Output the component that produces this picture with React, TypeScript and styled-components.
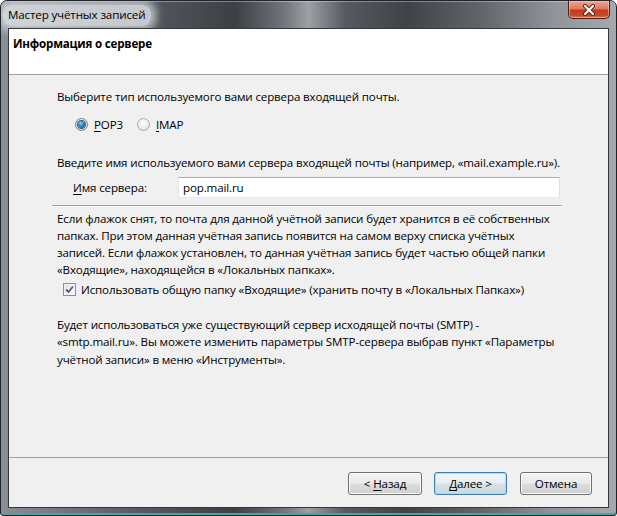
import React from 'react';
import styled, { createGlobalStyle } from 'styled-components';

const Global = createGlobalStyle`
  html, body { margin: 0; padding: 0; background: #ffffff; }
  body { font-family: "Open Sans", "Noto Sans", sans-serif; color: #000; }
`;

const Window = styled.div`
  width: 617px;
  height: 516px;
  box-sizing: border-box;
  display: flex;
  flex-direction: column;
  border: 1px solid #202428;
  border-radius: 7px 7px 3px 3px;
  overflow: hidden;
  background: linear-gradient(
    90deg,
    #8a9095 0%,
    #6c7277 12%,
    #50565b 25%,
    #3b4045 38%,
    #6f757a 46%,
    #9aa0a4 50%,
    #545a5f 56%,
    #3e4347 66%,
    #5f6569 78%,
    #8f959a 90%,
    #a3a9ad 100%
  );
  box-shadow: inset 0 -2px 0 #4e9fb0, inset 0 1px 0 rgba(255, 255, 255, 0.35);
`;

const TitleBar = styled.div`
  height: 27px;
  display: flex;
  align-items: flex-start;
  justify-content: space-between;
  flex-shrink: 0;
`;

const TitleText = styled.span`
  margin: 4px 0 0 2px;
  padding: 2px 6px 3px 5px;
  font-size: 11.6px;
  letter-spacing: -0.15px;
  line-height: 16px;
  color: #000;
  border-radius: 8px;
  background: rgba(222, 226, 229, 0.82);
  box-shadow: 0 0 8px 5px rgba(222, 226, 229, 0.75);
`;

const CloseButton = styled.div`
  width: 42px;
  height: 18px;
  margin-right: 6px;
  box-sizing: border-box;
  border: 1px solid #4a1c14;
  border-top: none;
  border-radius: 0 0 5px 5px;
  background: linear-gradient(
    180deg,
    #eba393 0%,
    #dc7a62 45%,
    #c23a1e 55%,
    #c8482a 85%,
    #df7450 100%
  );
  box-shadow: inset 0 0 0 1px rgba(255, 220, 210, 0.5);
  display: flex;
  align-items: center;
  justify-content: center;
`;

const Client = styled.div`
  flex: 1;
  margin: 0 7px 7px 7px;
  display: flex;
  flex-direction: column;
  border: 1px solid #33383c;
  background: #f0f0f0;
`;

const Header = styled.div`
  height: 46px;
  box-sizing: border-box;
  background: #ffffff;
  border-bottom: 1px solid #a0a0a0;
  padding: 6px 0 0 4px;
  flex-shrink: 0;
`;

const HeaderTitle = styled.div`
  font-size: 11.6px;
  letter-spacing: -0.2px;
  font-weight: 700;
  line-height: 17px;
`;

const Body = styled.div`
  flex: 1;
  padding: 13px 46px 0 48px;
  font-size: 11.6px;
  letter-spacing: -0.15px;
`;

const Para = styled.div<{ $top: number; $lh?: number }>`
  margin-top: ${(p) => p.$top}px;
  line-height: ${(p) => p.$lh ?? 17}px;
  white-space: nowrap;
`;

const Line = styled.span`
  display: block;
`;

const RadioRow = styled.div`
  margin-top: 11px;
  padding-left: 18px;
  height: 17px;
  display: flex;
  align-items: center;
`;

const RadioItem = styled.label`
  display: flex;
  align-items: center;
  gap: 6px;
  margin-right: 14px;
  line-height: 17px;
`;

const RadioCircle = styled.span<{ $checked?: boolean }>`
  width: 13px;
  height: 13px;
  box-sizing: border-box;
  border-radius: 50%;
  border: 1px solid ${(p) => (p.$checked ? '#6a7f8e' : '#a8acb0')};
  background: radial-gradient(circle at 50% 40%, #ffffff 0%, #e9eaeb 60%, #cfd2d4 100%);
  display: flex;
  align-items: center;
  justify-content: center;
  &::after {
    content: '';
    display: ${(p) => (p.$checked ? 'block' : 'none')};
    width: 7px;
    height: 7px;
    border-radius: 50%;
    background: radial-gradient(circle at 40% 35%, #7fd0f2 0%, #2a86b8 45%, #0e4a6c 100%);
    box-shadow: 0 0 0 1px #2d5370;
  }
`;

const U = styled.span`
  text-decoration: underline;
  text-underline-offset: 2px;
`;

const InputRow = styled.div`
  margin-top: 6px;
  padding-left: 16px;
  display: flex;
  align-items: center;
  height: 21px;
`;

const FieldLabel = styled.label`
  width: 105px;
  line-height: 17px;
`;

const TextInput = styled.div`
  width: 382px;
  height: 21px;
  box-sizing: border-box;
  background: #ffffff;
  border: 1px solid #dbdfe6;
  border-top-color: #abadb3;
  border-left-color: #e2e3ea;
  border-right-color: #dbdfe6;
  border-bottom-color: #e3e9ef;
  padding: 0 4px;
  line-height: 19px;
`;

const Separator = styled.div`
  margin: 7px 0 0 -5px;
  width: 510px;
  height: 1px;
  background: #a0a0a0;
  box-shadow: 0 1px 0 #ffffff;
`;

const CheckRow = styled.div`
  margin-top: 2px;
  padding-left: 6px;
  display: flex;
  align-items: center;
  gap: 5px;
  height: 17px;
  line-height: 17px;
  white-space: nowrap;
`;

const CheckBox = styled.span`
  width: 13px;
  height: 13px;
  box-sizing: border-box;
  border: 1px solid #8f8f8f;
  background: linear-gradient(135deg, #dcdcdc 0%, #f6f6f6 70%, #ffffff 100%);
  box-shadow: inset 0 0 0 1px #f4f4f4;
  display: flex;
  align-items: center;
  justify-content: center;
`;

const Footer = styled.div`
  height: 50px;
  box-sizing: border-box;
  border-top: 1px solid #a0a0a0;
  display: flex;
  justify-content: flex-end;
  align-items: flex-start;
  padding: 14px 16px 0 0;
  flex-shrink: 0;
`;

const Button = styled.button<{ $default?: boolean; $w: number; $gap: number }>`
  width: ${(p) => p.$w}px;
  height: 23px;
  margin-left: ${(p) => p.$gap}px;
  box-sizing: border-box;
  font-family: "Open Sans", "Noto Sans", sans-serif;
  font-size: 11.6px;
  letter-spacing: -0.15px;
  color: #000;
  padding: 0;
  border-radius: 3px;
  border: 1px solid ${(p) => (p.$default ? '#3c7fb1' : '#707070')};
  background: ${(p) =>
    p.$default
      ? 'linear-gradient(180deg, #f1f6f9 0%, #e8eef2 48%, #d8e2e8 52%, #cbd8e0 100%)'
      : 'linear-gradient(180deg, #f2f2f2 0%, #ebebeb 48%, #dddddd 52%, #cfcfcf 100%)'};
  box-shadow: inset 0 0 0 1px ${(p) => (p.$default ? '#a9dcf5' : '#fbfbfb')};
  cursor: default;
`;

export default function App() {
  return (
    <>
      <Global />
      <Window>
        <TitleBar>
          <TitleText>Мастер учётных записей</TitleText>
          <CloseButton>
            <svg width="14" height="12" viewBox="0 0 14 12">
              <path d="M3 2 L11 10 M11 2 L3 10" stroke="#5a2418" strokeWidth="4" strokeLinecap="round" />
              <path d="M3 2 L11 10 M11 2 L3 10" stroke="#ffffff" strokeWidth="2.2" strokeLinecap="round" />
            </svg>
          </CloseButton>
        </TitleBar>
        <Client>
          <Header>
            <HeaderTitle>Информация о сервере</HeaderTitle>
          </Header>
          <Body>
            <Para $top={0}>Выберите тип используемого вами сервера входящей почты.</Para>
            <RadioRow>
              <RadioItem>
                <RadioCircle $checked />
                <span>
                  <U>P</U>OP3
                </span>
              </RadioItem>
              <RadioItem>
                <RadioCircle />
                <span>
                  <U>I</U>MAP
                </span>
              </RadioItem>
            </RadioRow>
            <Para $top={21}>
              Введите имя используемого вами сервера входящей почты (например, «mail.example.ru»).
            </Para>
            <InputRow>
              <FieldLabel>
                <U>И</U>мя сервера:
              </FieldLabel>
              <TextInput>pop.mail.ru</TextInput>
            </InputRow>
            <Separator />
            <Para $top={3.5} $lh={17.3}>
              <Line>Если флажок снят, то почта для данной учётной записи будет хранится в её собственных</Line>
              <Line>папках. При этом данная учётная запись появится на самом верху списка учётных</Line>
              <Line>записей. Если флажок установлен, то данная учётная запись будет частью общей папки</Line>
              <Line>«Входящие», находящейся в «Локальных папках».</Line>
            </Para>
            <CheckRow>
              <CheckBox>
                <svg width="9" height="9" viewBox="0 0 9 9">
                  <path d="M1 4.5 L3.5 7 L8 1.5" fill="none" stroke="#4b5d84" strokeWidth="1.8" />
                </svg>
              </CheckBox>
              <span>Использовать общую папку «Входящие» (хранить почту в «Локальных Папках»)</span>
            </CheckRow>
            <Para $top={18} $lh={17.5}>
              <Line>Будет использоваться уже существующий сервер исходящей почты (SMTP) -</Line>
              <Line>«smtp.mail.ru». Вы можете изменить параметры SMTP-сервера выбрав пункт «Параметры</Line>
              <Line>учётной записи» в меню «Инструменты».</Line>
            </Para>
          </Body>
          <Footer>
            <Button $w={74} $gap={0}>
              &lt; <U>Н</U>азад
            </Button>
            <Button $w={73} $gap={12} $default>
              <U>Д</U>алее &gt;
            </Button>
            <Button $w={72} $gap={13}>
              Отмена
            </Button>
          </Footer>
        </Client>
      </Window>
    </>
  );
}
